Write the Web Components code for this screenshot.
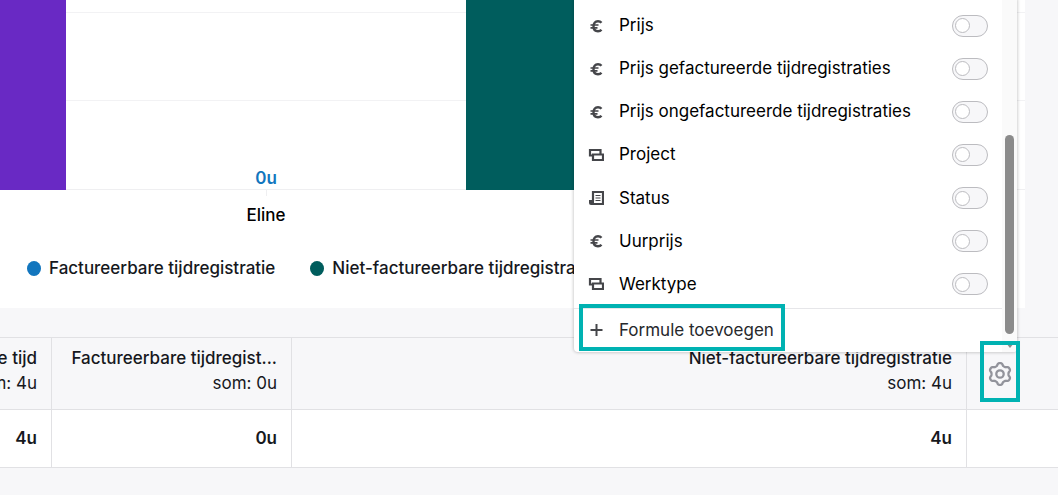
<!DOCTYPE html>
<html lang="nl">
<head>
<meta charset="utf-8">
<title>Tijdregistratie</title>
<style>
  body { margin: 0; background: #f7f7f9; color: #16181d; font: 400 17px/25px Inter, "Liberation Sans", sans-serif; overflow: hidden; }
</style>
</head>
<body>
<report-page>
  <hour-chart slot="chart"></hour-chart>
  <hour-table slot="table"></hour-table>
  <column-menu slot="menu">
    <column-toggle icon="euro">Prijs</column-toggle>
    <column-toggle icon="euro">Prijs gefactureerde tijdregistraties</column-toggle>
    <column-toggle icon="euro">Prijs ongefactureerde tijdregistraties</column-toggle>
    <column-toggle icon="relation">Project</column-toggle>
    <column-toggle icon="status">Status</column-toggle>
    <column-toggle icon="euro">Uurprijs</column-toggle>
    <column-toggle icon="relation">Werktype</column-toggle>
  </column-menu>
</report-page>
<script>
const icons = {
  euro: '<path d="M13.500 4.800Q12.200 3.300 10 3.300C7 3.300 5.500 5.400 5.500 8.300s1.500 5 4.500 5q2.200 0 3.500-1.500" fill="none" stroke="#45464a" stroke-width="2.400"/><path d="M2.500 7h8M2.500 9.800h7" stroke="#45464a" stroke-width="1.700"/>',
  relation: '<path d="M4.500 8.500H2V3H12.500v4M5 7.500H15V13H5Z" fill="none" stroke="#45464a" stroke-width="2.200"/>',
  status: '<path d="M5 11V2H15v12H4" fill="none" stroke="#45464a" stroke-width="2.200"/><path d="M1 10h5v5H3q-2 0-2-2z" fill="#45464a"/><path d="M7.500 5.500h5M7.500 8h5M7.500 10.500h5" stroke="#45464a" stroke-width="1.200"/>',
  plus: '<path d="M8.500 2v12M2.500 8h12" fill="none" stroke="#45464a" stroke-width="2"/>'
};
const svg = name => `<svg width="16" height="16" viewBox="0 0 16 16" aria-hidden="true">${icons[name]}</svg>`;

// Outline of a cog with six rounded teeth, one of them pointing up.
const cog = 'M' + Array.from({ length: 120 }, (_, i) => {
  const a = i * Math.PI / 60;
  const r = 9.7 + 1.2 * Math.tanh(1.6 * Math.cos(6 * a)) / Math.tanh(1.6);
  return (13 + r * Math.sin(a)).toFixed(2) + ' ' + (13 - r * Math.cos(a)).toFixed(2);
}).join('L') + 'Z';

const define = (name, markup) => customElements.define(name, class extends HTMLElement {
  constructor() {
    super();
    this.attachShadow({ mode: 'open' }).innerHTML = typeof markup === 'function' ? markup(this) : markup;
  }
});

define('report-page', `
<style>
  :host { display: block; position: relative; }
  ::slotted([slot=chart]) { margin: 0 33px 29px 0; }
  ::slotted([slot=menu]) { position: absolute; top: 0; right: 41px; z-index: 1; }
</style>
<slot name="chart"></slot><slot name="table"></slot><slot name="menu"></slot>`);

define('chart-legend-item', `
<style>
  :host { display: flex; align-items: center; gap: 8px; white-space: nowrap; }
  i { width: 14px; height: 15px; border-radius: 50%; background: var(--dot); }
</style>
<i></i><span><slot></slot></span>`);

define('hour-chart', `
<style>
  :host { display: block; background: #fff; font-weight: 500; overflow: hidden; }
  .plot { display: grid; grid-template-columns: 66px 400px 200px; height: 190px;
    background: linear-gradient(#f2f2f4, #f2f2f4) 0 12px / 100% 1px no-repeat,
                linear-gradient(#f2f2f4, #f2f2f4) 0 100px / 100% 1px no-repeat,
                linear-gradient(#efeff1, #efeff1) 0 189px / 100% 1px no-repeat; }
  .purple { background: #6929c4; }
  .green { background: #005d5d; }
  .value { align-self: end; line-height: 23px; text-align: center; color: #1276be; font-weight: 600; }
  .axis { display: grid; grid-template-columns: 66px 400px; }
  .axis span { grid-column: 2; text-align: center; line-height: 26px; color: #000; }
  .axis span::before { content: ""; display: block; width: 1px; height: 6px; margin: 0 auto 6px; background: #efeff1; }
  .legend { display: flex; gap: 35px; padding: 28px 27px 27px; }
</style>
<div class="plot"><div class="purple"></div><div class="value">0u</div><div class="green"></div></div>
<div class="axis"><span>Eline</span></div>
<div class="legend">
  <chart-legend-item style="--dot:#1276be">Factureerbare tijdregistratie</chart-legend-item>
  <chart-legend-item style="--dot:#005d5d">Niet-factureerbare tijdregistratie</chart-legend-item>
</div>`);

define('hour-table', `
<style>
  :host { display: block; }
  table { width: 100%; table-layout: fixed; border-collapse: separate; border-spacing: 0; border-top: 1px solid #e1e1e4; }
  th, td { box-sizing: border-box; border: 0 solid #e1e1e4; border-width: 0 1px 1px 0; text-align: right; white-space: nowrap; overflow: hidden; }
  th { height: 72px; padding: 8px 14px 13px 0; vertical-align: top; font-weight: 500; }
  th div { display: flex; justify-content: flex-end; }
  small { font-size: inherit; font-weight: 400; }
  td { height: 58px; padding: 0 14px 0 0; background: #fff; font-weight: 600; }
  th:last-child, td:last-child { border-right: 0; padding: 0; overflow: visible; }
  button { display: flex; align-items: center; justify-content: center; position: relative; z-index: 2;
    width: 40px; height: 61px; margin: 3px 0 0 13px; padding: 4px 0 0; border: 4px solid #00b2b2; background: none; }
  svg { flex: none; }
</style>
<table>
  <colgroup><col style="width:52px"><col style="width:240px"><col><col style="width:91px"></colgroup>
  <thead><tr>
    <th><div>e tijd</div><div><small>m: 4u</small></div></th>
    <th><div>Factureerbare tijdregist...</div><div><small>som: 0u</small></div></th>
    <th><div>Niet-factureerbare tijdregistratie</div><div><small>som: 4u</small></div></th>
    <th><button aria-label="Kolommen instellen"><svg width="26" height="26" viewBox="0 0 26 26" fill="none" stroke="#92939b" stroke-width="2.300" stroke-linejoin="round"><path d="${cog}"/><circle cx="13" cy="13" r="3.700"/></svg></button></th>
  </tr></thead>
  <tbody><tr><td>4u</td><td>0u</td><td>4u</td><td></td></tr></tbody>
</table>`);

define('column-toggle', host => `
<style>
  :host { display: block; color: #000; }
  label { display: flex; align-items: center; gap: 15px; height: 100%; padding: 0 14px; }
  span { flex: 1; white-space: nowrap; }
  svg { flex: none; }
  input { appearance: none; display: flex; align-items: center; flex: none; box-sizing: border-box; width: 36px; height: 22px; margin: 0; padding-left: 2px;
    border: 1px solid #bcbcc0; border-radius: 11px; background: #f7f7f9; }
  input::before { content: ""; box-sizing: border-box; width: 15px; height: 15px; border: 1px solid #bcbcc0; border-radius: 50%; background: #fff; }
  input:checked { justify-content: flex-end; background: #00b2b2; }
</style>
<label>${svg(host.getAttribute('icon'))}<span><slot></slot></span><input type="checkbox" role="switch"></label>`);

define('column-menu', `
<style>
  :host { display: flex; width: 443px; background: #fff; border-radius: 0 0 4px 4px; box-shadow: 0 0 3px 1px rgba(0,0,0,.18); }
  .body { flex: 1; }
  .list { display: grid; grid-auto-rows: 1fr; height: 302px; padding: 4px 0 2px; border-bottom: 1px solid #e6e6e9; }
  .foot { padding-left: 5px; height: 43px; }
  button { display: flex; align-items: center; gap: 15px; box-sizing: border-box; position: relative; width: 206px; height: 47px; margin: 0; top: -5px; padding: 5px 0 0 5px;
    border: 4px solid #00b2b2; background: none; color: #26282c; font: inherit; white-space: nowrap; }
  .bar { display: flex; flex-direction: column; align-items: center; box-sizing: border-box; width: 15px; padding-top: 135px; background: #fafafa; border-radius: 0 0 4px; }
  .thumb { width: 9px; height: 199px; border-radius: 5px; background: #8b8b8b; }
  .arrow { margin-top: 9px; border: 4px solid transparent; border-top: 5px solid #8b8b8b; border-bottom: 0; }
</style>
<div class="body">
  <div class="list"><slot></slot></div>
  <div class="foot"><button>${svg('plus')}Formule toevoegen</button></div>
</div>
<div class="bar"><div class="thumb"></div><div class="arrow"></div></div>`);
</script>
</body>
</html>
